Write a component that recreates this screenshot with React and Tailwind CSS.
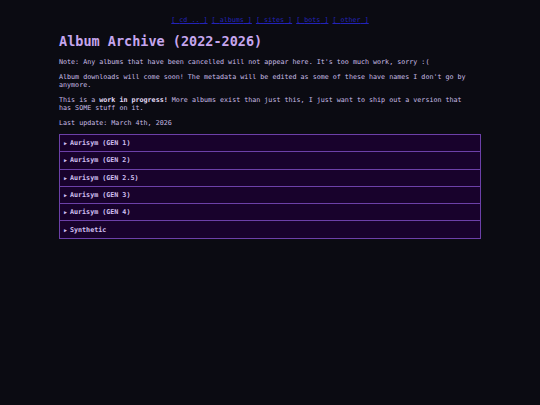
import React from "react";

const albums = [
  "Aurisym (GEN 1)",
  "Aurisym (GEN 2)",
  "Aurisym (GEN 2.5)",
  "Aurisym (GEN 3)",
  "Aurisym (GEN 4)",
  "Synthetic",
];

const links = ["cd ..", "albums", "sites", "bots", "other"];

const App = () => {
  return (
    <div
      className="min-h-[405px] bg-[#0b0b12] text-[#c9bde6] text-[6.7px] leading-[8px]"
      style={{ fontFamily: '"DejaVu Sans Mono", monospace' }}
    >
      {/* Nav */}
      <nav className="pt-[16px] text-center text-[#2323b8]">
        {links.map((l, i) => (
          <React.Fragment key={l}>
            <a href="#" className="underline">
              [ {l} ]
            </a>
            {i < links.length - 1 && " "}
          </React.Fragment>
        ))}
      </nav>

      <main className="w-[422px] mx-auto">
        <h1 className="mt-[9px] text-[13.5px] leading-[16px] font-bold text-[#c6a6ee]">
          Album Archive (2022-2026)
        </h1>

        <div className="w-[416px]">
          <p className="mt-[9px]">
            Note: Any albums that have been cancelled will not appear here.
            It's too much work, sorry :(
          </p>
          <p className="mt-[7px]">
            Album downloads will come soon! The metadata will be edited as some
            of these have names I don't go by anymore.
          </p>
          <p className="mt-[7px]">
            This is a <b className="text-[#e4dcf6]">work in progress!</b> More
            albums exist than just this, I just want to ship out a version that
            has SOME stuff on it.
          </p>
          <p className="mt-[7px]">Last update: March 4th, 2026</p>
        </div>

        {/* Album list */}
        <div className="mt-[7px] border-t border-[#6c40a8]">
          {albums.map((a) => (
            <div
              key={a}
              className="h-[17.3px] flex items-center pl-[4px] bg-[#18022c] border-x border-b border-[#6c40a8] font-bold text-[#d3c0f2]"
            >
              <span className="text-[5px] mr-[3px]">▶</span>
              {a}
            </div>
          ))}
        </div>
      </main>
    </div>
  );
};

export default App;
